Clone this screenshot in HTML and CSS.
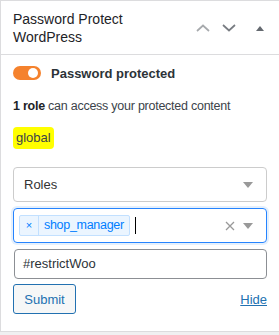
FILE: index.html
```html
<!DOCTYPE html>
<html>
<head>
<meta charset="utf-8">
<link rel="stylesheet" href="styles.css">
</head>
<body>
<div class="panel">
  <div class="header">
    <h2 class="title">Password Protect WordPress</h2>
    <div class="controls">
      <svg class="ic up" width="14" height="8" viewBox="0 0 14 8"><path d="M1 7 L7 1.5 L13 7" fill="none" stroke="#a7aaad" stroke-width="1.7"/></svg>
      <svg class="ic down" width="14" height="8" viewBox="0 0 14 8"><path d="M1 1 L7 6.5 L13 1" fill="none" stroke="#787c82" stroke-width="1.7"/></svg>
      <svg class="ic tri" width="8" height="5" viewBox="0 0 8 5"><path d="M0 5 L4 0 L8 5 Z" fill="#646970"/></svg>
    </div>
  </div>
  <div class="body">
    <div class="toggle-row">
      <span class="toggle"><span class="knob"></span></span>
      <span class="toggle-label">Password protected</span>
    </div>
    <p class="info"><b>1 role</b> can access your protected content</p>
    <div class="tag-row"><span class="global">global</span></div>
    <div class="select">
      <span class="placeholder">Roles</span>
      <svg class="caret" width="10" height="6" viewBox="0 0 10 6"><path d="M0 0 L10 0 L5 6 Z" fill="#999"/></svg>
    </div>
    <div class="multi">
      <span class="chip"><span class="chip-x">×</span><span class="chip-text">shop_manager</span></span>
      <span class="cursor"></span>
      <span class="spacer"></span>
      <svg class="clear" width="10" height="10" viewBox="0 0 10 10"><path d="M1 1 L9 9 M9 1 L1 9" stroke="#999" stroke-width="1.3"/></svg>
      <svg class="caret" width="10" height="6" viewBox="0 0 10 6"><path d="M0 0 L10 0 L5 6 Z" fill="#999"/></svg>
    </div>
    <div class="input">#restrictWoo</div>
    <div class="actions">
      <button class="btn">Submit</button>
      <a class="hide" href="#">Hide</a>
    </div>
  </div>
</div>
</body>
</html>
```
FILE: styles.css
```css
html, body {
  margin: 0;
  padding: 0;
  background: #f0f0f1;
}
body {
  font-family: "Liberation Sans", Arial, sans-serif;
  color: #1e1e1e;
  width: 279px;
  height: 335px;
  overflow: hidden;
}
.panel {
  background: #fff;
  border: 1px solid #dcdcde;
  border-right: none;
  box-sizing: border-box;
  height: 332px;
}
.header {
  display: flex;
  align-items: center;
  height: 53px;
  border-bottom: 1px solid #dcdcde;
  padding-left: 12px;
}
.title {
  margin: 0;
  font-size: 14px;
  line-height: 18px;
  font-weight: 400;
  width: 150px;
  color: #1d2327;
}
.controls {
  display: flex;
  align-items: center;
  margin-left: auto;
  margin-top: 1px;
}
.ic { display: block; }
.up { margin-right: 12px; }
.down { margin-right: 20px; }
.tri { margin-right: 15px; }
.body {
  padding: 0 12px;
}
.toggle-row {
  display: flex;
  align-items: center;
  margin-top: 11px;
  height: 14px;
}
.toggle {
  width: 28px;
  height: 14px;
  border-radius: 7px;
  background: #f5822d;
  position: relative;
  display: block;
}
.knob {
  position: absolute;
  right: 3px;
  top: 2px;
  width: 10px;
  height: 10px;
  border-radius: 50%;
  background: #fff;
}
.toggle-label {
  margin-left: 10px;
  font-weight: 700;
  font-size: 13px;
  color: #2c3338;
}
.info {
  margin: 17px 0 0;
  font-size: 12.5px;
  letter-spacing: -0.25px;
  line-height: 18px;
  color: #3c434a;
}
.info b { font-weight: 700; color: #1d2327; }
.tag-row {
  margin-top: 12px;
  display: flex;
}
.global {
  background: #ffff00;
  border-radius: 4px;
  font-size: 13px;
  line-height: 22px;
  padding: 0 3px;
  color: #3c434a;
}
.select {
  margin-top: 18px;
  height: 35px;
  box-sizing: border-box;
  border: 1px solid #ccc;
  border-radius: 4px;
  display: flex;
  align-items: center;
  padding: 0 13px 0 10px;
  font-size: 13px;
  color: #333;
}
.placeholder { flex: 1; }
.multi {
  margin-top: 6px;
  height: 35px;
  box-sizing: border-box;
  border: 1px solid #2684ff;
  box-shadow: 0 0 0 2px #e5f0fc;
  border-radius: 4px;
  display: flex;
  align-items: center;
  padding: 0 13px 0 5px;
  font-size: 13px;
}
.chip {
  display: flex;
  align-items: stretch;
  height: 21px;
  border: 1px solid #c2e0ff;
  background: #ebf5ff;
  border-radius: 2px;
  box-sizing: border-box;
  color: #007eff;
}
.chip-x {
  width: 18px;
  text-align: center;
  border-right: 1px solid #c2e0ff;
  font-size: 11px;
  line-height: 19px;
}
.chip-text {
  padding: 0 5px;
  line-height: 19px;
  font-size: 12.5px;
  letter-spacing: -0.3px;
}
.cursor {
  width: 1px;
  height: 17px;
  background: #000;
  margin-left: 5px;
}
.spacer { flex: 1; }
.clear { margin-right: 8px; }
.input {
  margin-top: 6px;
  margin-left: 1px;
  height: 30px;
  box-sizing: border-box;
  border: 1px solid #8c8f94;
  border-radius: 4px;
  padding: 0 8px;
  font-size: 13px;
  line-height: 28px;
  color: #2c3338;
}
.actions {
  display: flex;
  align-items: center;
  justify-content: space-between;
  margin-top: 5px;
}
.btn {
  font-family: inherit;
  font-size: 13px;
  height: 30px;
  width: 63px;
  padding: 0;
  border: 1px solid #2271b1;
  border-radius: 3px;
  background: #f6f7f7;
  color: #2271b1;
}
.hide {
  color: #2271b1;
  font-size: 13px;
  text-decoration: underline;
}
```
